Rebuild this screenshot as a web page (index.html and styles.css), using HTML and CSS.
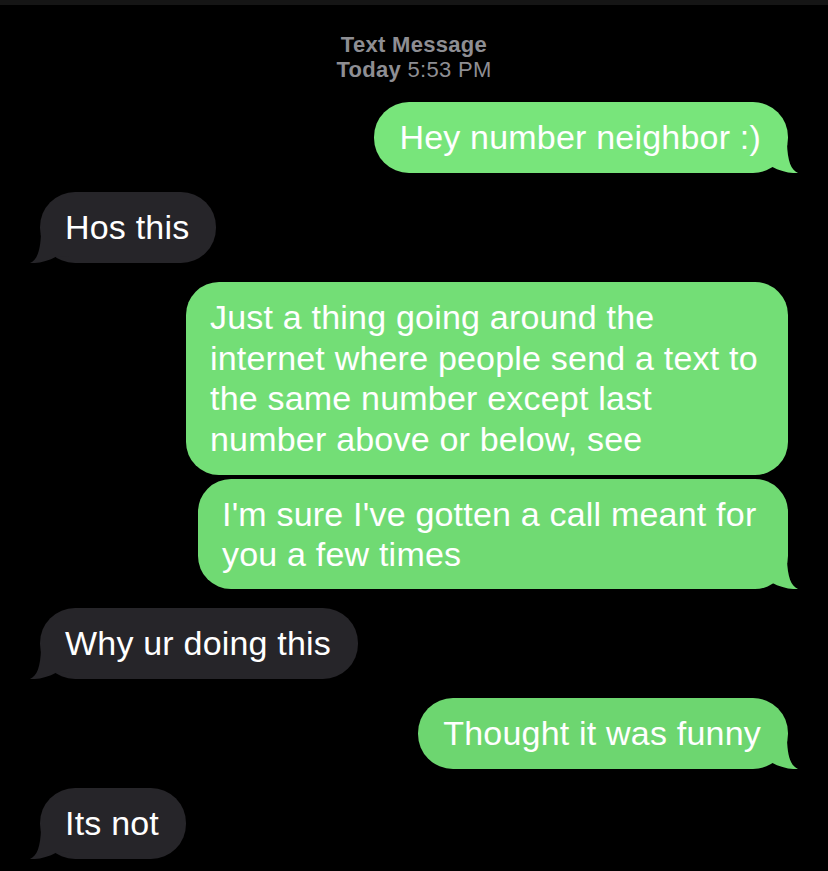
FILE: index.html
```html
<!DOCTYPE html>
<html lang="en">
<head>
<meta charset="utf-8">
<title>Messages</title>
<link rel="stylesheet" href="styles.css">
</head>
<body>
<div class="topbar"></div>
<header class="meta">
  <div class="meta-line"><b>Text Message</b></div>
  <div class="meta-line"><b>Today</b> 5:53 PM</div>
</header>
<main class="thread">
  <div class="row out">
    <div class="bubble green g1">Hey number neighbor :)<svg class="tail" viewBox="-30 -30 42 30"><path d="M-30,-30 L0,-30 C0.5,-12 4,-3 11,0 C5,0.6 -7,-1.5 -15,-6.3 L-30,-6 Z"/></svg></div>
  </div>
  <div class="row in">
    <div class="bubble gray">Hos this<svg class="tail" viewBox="-30 -30 42 30"><path d="M-30,-30 L0,-30 C0.5,-12 4,-3 11,0 C5,0.6 -7,-1.5 -15,-6.3 L-30,-6 Z"/></svg></div>
  </div>
  <div class="row out">
    <div class="bubble green g2">Just a thing going around the internet where people send a text to the same number except last number above or below, see</div>
  </div>
  <div class="row out tight">
    <div class="bubble green g3">I'm sure I've gotten a call meant for you a few times<svg class="tail" viewBox="-30 -30 42 30"><path d="M-30,-30 L0,-30 C0.5,-12 4,-3 11,0 C5,0.6 -7,-1.5 -15,-6.3 L-30,-6 Z"/></svg></div>
  </div>
  <div class="row in">
    <div class="bubble gray">Why ur doing this<svg class="tail" viewBox="-30 -30 42 30"><path d="M-30,-30 L0,-30 C0.5,-12 4,-3 11,0 C5,0.6 -7,-1.5 -15,-6.3 L-30,-6 Z"/></svg></div>
  </div>
  <div class="row out">
    <div class="bubble green g4">Thought it was funny<svg class="tail" viewBox="-30 -30 42 30"><path d="M-30,-30 L0,-30 C0.5,-12 4,-3 11,0 C5,0.6 -7,-1.5 -15,-6.3 L-30,-6 Z"/></svg></div>
  </div>
  <div class="row in">
    <div class="bubble gray">Its not<svg class="tail" viewBox="-30 -30 42 30"><path d="M-30,-30 L0,-30 C0.5,-12 4,-3 11,0 C5,0.6 -7,-1.5 -15,-6.3 L-30,-6 Z"/></svg></div>
  </div>
</main>
</body>
</html>
```

FILE: styles.css
```css
html, body {
  margin: 0;
  padding: 0;
  background: #000;
}
body {
  width: 828px;
  height: 871px;
  overflow: hidden;
  font-family: "Liberation Sans", Arial, sans-serif;
}
.topbar {
  height: 5px;
  background: #151515;
}
.meta {
  margin-top: 27px;
  text-align: center;
  color: #8e8e93;
  font-size: 22px;
  line-height: 25px;
  letter-spacing: 0.3px;
}
.meta b {
  font-weight: 700;
}
.thread {
  display: flex;
  flex-direction: column;
  gap: 19px;
  padding: 20px 40px 0 40px;
}
.row {
  display: flex;
}
.row.out {
  justify-content: flex-end;
}
.row.in {
  justify-content: flex-start;
}
.row.tight {
  margin-top: -15px;
}
.bubble {
  position: relative;
  z-index: 0;
  box-sizing: border-box;
  max-width: 608px;
  padding: 15px 27px 15.5px 25px;
  border-radius: 35px;
  font-size: 34px;
  line-height: 40.5px;
  letter-spacing: 0.2px;
  color: #fff;
}
.bubble.green.g2,
.bubble.green.g3 {
  border-radius: 33px;
  padding-left: 24px;
}
.bubble.g2 { max-width: 602px; }
.bubble.g3 { max-width: 590px; padding-bottom: 14.5px; }
.g1 { background: #78e57b; fill: #78e57b; }
.g2 { background: #73de76; }
.g3 { background: #70da73; fill: #70da73; }
.g4 { background: #6dd670; fill: #6dd670; }
.gray {
  background: #262529;
  fill: #262529;
}
.tail {
  position: absolute;
  z-index: -1;
  bottom: 0;
  width: 42px;
  height: 30px;
  display: block;
}
.green .tail {
  right: -11px;
}
.gray .tail {
  left: -11px;
  transform: scaleX(-1);
}
```
